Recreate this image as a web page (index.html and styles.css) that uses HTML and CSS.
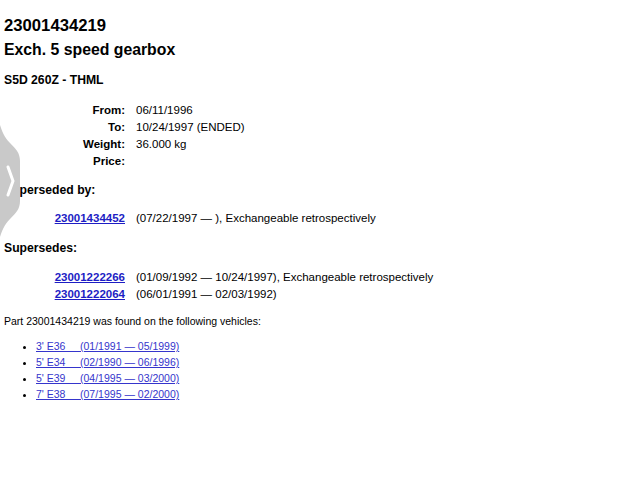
FILE: index.html
```html
<!DOCTYPE html>
<html>
<head>
<meta charset="utf-8">
<link rel="stylesheet" href="styles.css">
</head>
<body>
<div class="tab">
  <svg width="22" height="112" viewBox="0 0 22 112">
    <path d="M0 0 C2 6 4 12 10 18 C16 24 20 28 20 36 L20 76 C20 84 16 88 10 94 C4 100 2 106 0 112 Z" fill="#c9c9c9"/>
    <path d="M8 42 L13 56 L8 70" fill="none" stroke="#fff" stroke-width="3" stroke-linecap="round" stroke-linejoin="round"/>
  </svg>
</div>
<h1 class="partno">23001434219</h1>
<h2 class="title">Exch. 5 speed gearbox</h2>
<h3 class="sub">S5D 260Z - THML</h3>
<div class="grid info">
  <div class="lbl">From:</div><div>06/11/1996</div>
  <div class="lbl">To:</div><div>10/24/1997 (ENDED)</div>
  <div class="lbl">Weight:</div><div>36.000 kg</div>
  <div class="lbl">Price:</div><div></div>
</div>
<h3 class="sec first">Superseded by:</h3>
<div class="grid">
  <div class="lbl"><a href="#">23001434452</a></div><div>(07/22/1997 — ), Exchangeable retrospectively</div>
</div>
<h3 class="sec second">Supersedes:</h3>
<div class="grid">
  <div class="lbl"><a href="#">23001222266</a></div><div>(01/09/1992 — 10/24/1997), Exchangeable retrospectively</div>
  <div class="lbl"><a href="#">23001222064</a></div><div>(06/01/1991 — 02/03/1992)</div>
</div>
<p class="found">Part 23001434219 was found on the following vehicles:</p>
<ul class="vehicles">
  <li><a href="#">3' E36     (01/1991 — 05/1999)</a></li>
  <li><a href="#">5' E34     (02/1990 — 06/1996)</a></li>
  <li><a href="#">5' E39     (04/1995 — 03/2000)</a></li>
  <li><a href="#">7' E38     (07/1995 — 02/2000)</a></li>
</ul>
</body>
</html>
```
FILE: styles.css
```css
html, body { background: #fff; }
body {
  margin: 0;
  padding: 0 4px;
  font-family: "Liberation Sans", Arial, sans-serif;
  font-size: 11.5px;
  color: #000;
}
.tab {
  position: absolute;
  left: 0;
  top: 125px;
  width: 22px;
  height: 112px;
}
.tab svg { display: block; }
.partno { font-size: 16.7px; margin: 15px 0 0; line-height: 21px; }
.title { font-size: 15.8px; margin: 4px 0 0; line-height: 20px; }
.sub { font-size: 12.2px; margin: 12px 0 0; line-height: 16px; }
.grid {
  display: grid;
  grid-template-columns: 121px 1fr;
  column-gap: 11px;
  line-height: 17px;
}
.info { margin-top: 14px; }
.lbl { text-align: right; font-weight: bold; }
.grid a { color: #1d1dc4; }
.sec { font-size: 12.2px; line-height: 16px; }
.sec.first { margin: 12px 0 12px; }
.sec.second { margin: 13px 0 13px; }
.found { font-size: 10.5px; margin: 11px 0 0; line-height: 14px; }
.vehicles { margin: 10px 0 0; padding-left: 32px; font-size: 10.5px; line-height: 16px; }
.vehicles a { color: #3535cc; white-space: pre; }
```
